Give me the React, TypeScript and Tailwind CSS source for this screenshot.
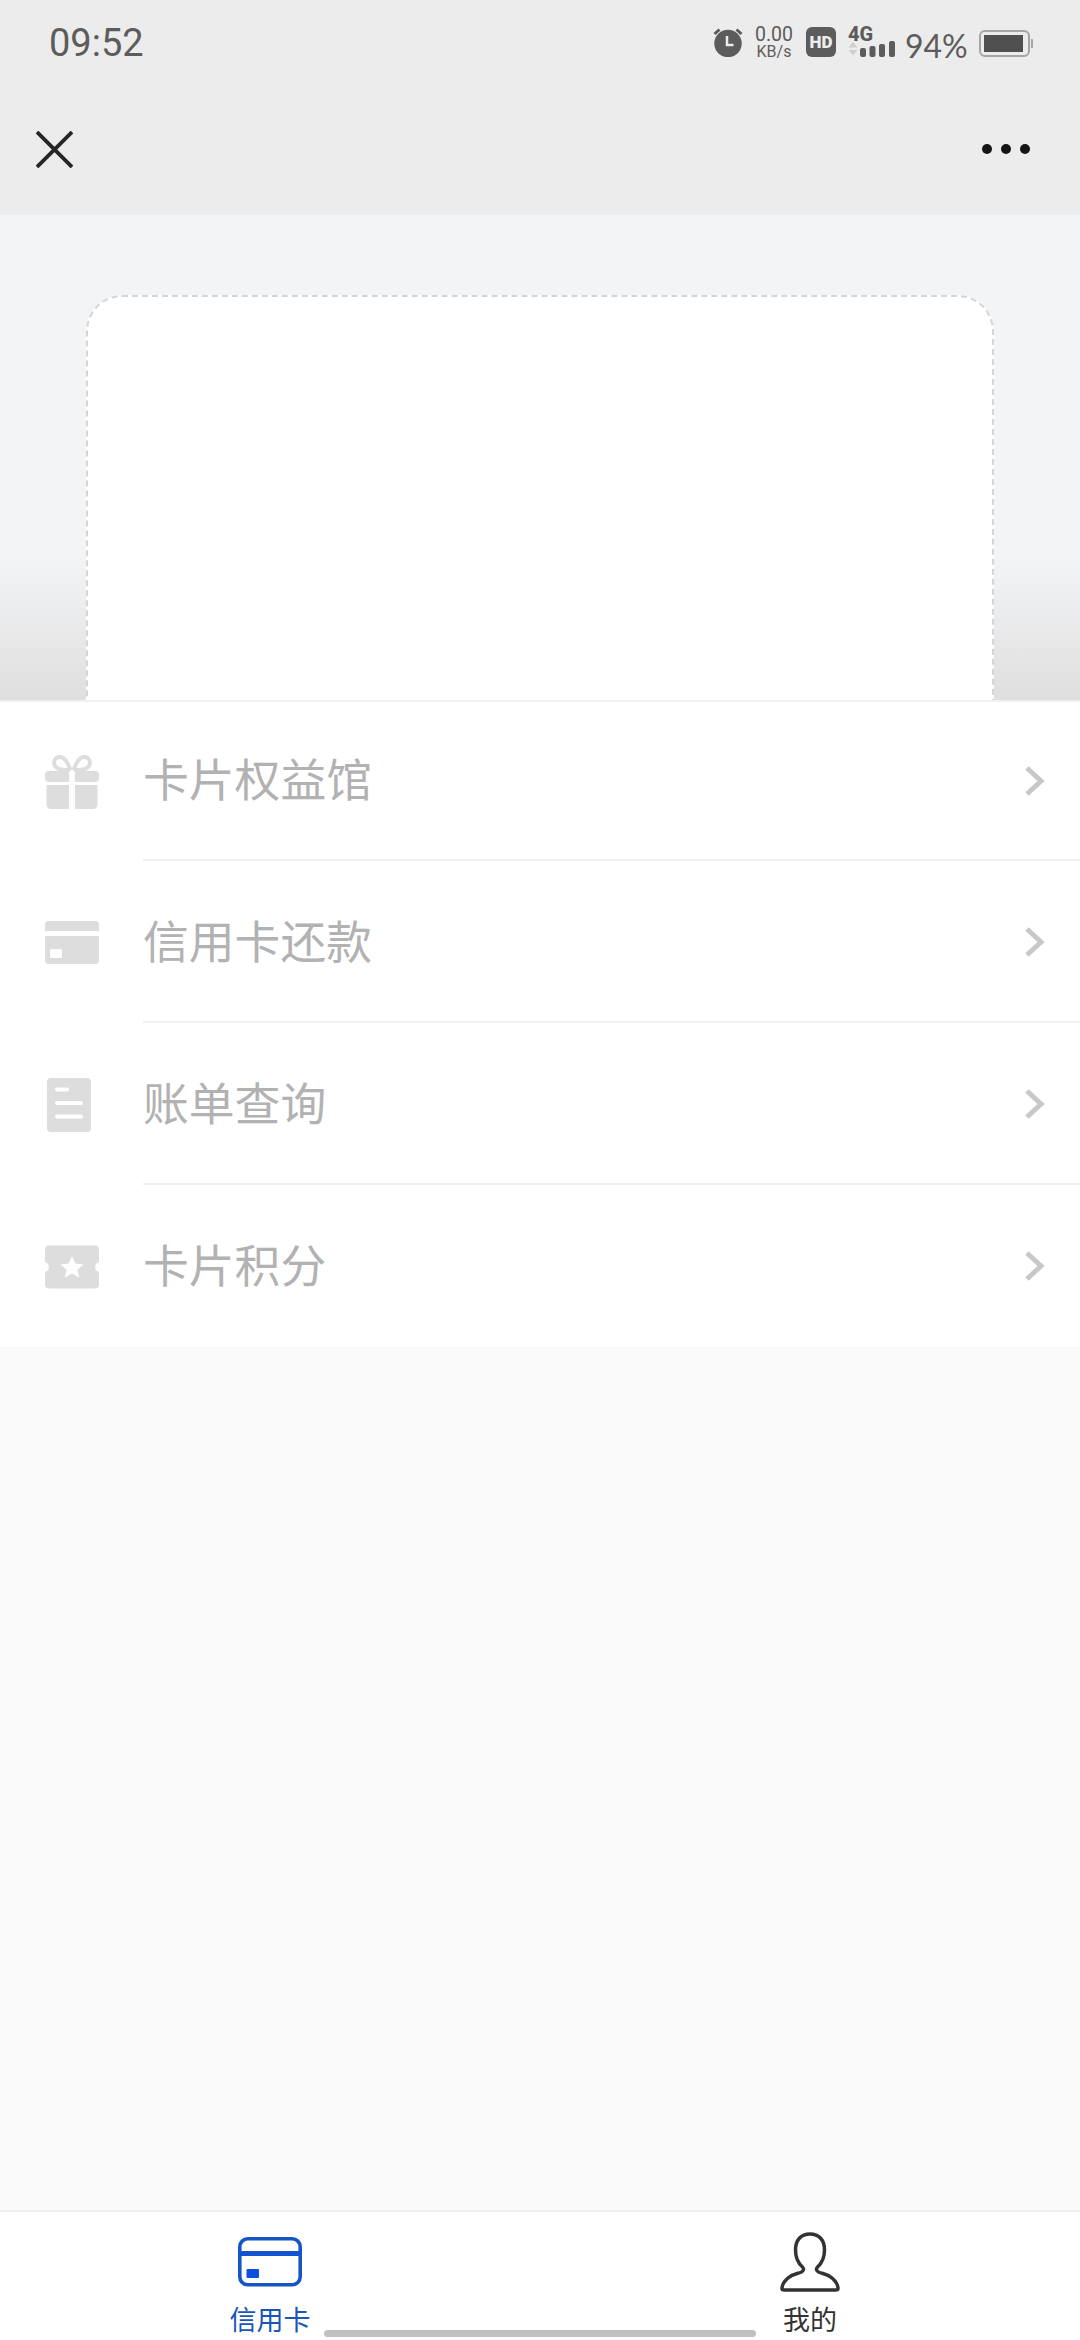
import React, { useState } from "react";

type TabKey = "card" | "mine";

interface MenuItem {
  label: string;
  icon: React.ReactNode;
}

const GiftIcon = () => (
  <svg width="54" height="54" viewBox="0 0 54 54" fill="#dddddd">
    <path
      d="M25 15C23 6 18 1.800 14.500 2C10.500 2.200 8 6 9.500 10C11 14 16 15.500 25 14.500ZM29 15C31 6 36 1.800 39.500 2C43.500 2.200 46 6 44.500 10C43 14 38 15.500 29 14.500Z"
      fill="none"
      stroke="#dddddd"
      strokeWidth="3.800"
    />
    <path d="M4 16H24V27H4Q0 27 0 23V20Q0 16 4 16ZM30 16H50Q54 16 54 20V23Q54 27 50 27H30Z" />
    <path d="M1.500 30H24V54H6.500Q1.500 54 1.500 49ZM30 30H52.500V49Q52.500 54 47.500 54H30Z" />
  </svg>
);

const CardIcon = () => (
  <svg width="54" height="54" viewBox="0 0 54 54" fill="#dddddd">
    <path d="M4 5H50Q54 5 54 9V15H0V9Q0 5 4 5Z" />
    <path d="M0 20H54V44Q54 48 50 48H4Q0 48 0 44Z" />
    <rect x="5" y="33" width="12" height="9" rx="1.500" fill="#ffffff" />
  </svg>
);

const BillIcon = () => (
  <svg width="54" height="54" viewBox="0 0 54 54">
    <rect x="2" width="44" height="54" rx="4" fill="#dddddd" />
    <path
      d="M12 11.500H22M12 25H36M12 38.500H36"
      stroke="#ffffff"
      strokeWidth="4"
      strokeLinecap="round"
    />
  </svg>
);

const PointsIcon = () => (
  <svg width="54" height="54" viewBox="0 0 54 54">
    <path
      d="M4 5.500H50Q54 5.500 54 9.500V22A5.200 5.200 0 0 0 54 32V44.500Q54 48.500 50 48.500H4Q0 48.500 0 44.500V32A5.200 5.200 0 0 0 0 22V9.500Q0 5.500 4 5.500Z"
      fill="#dddddd"
    />
    <path
      d="M27 16L30.500 23.500L38.500 24.500L32.500 30L34.200 37.500L27 33.500L19.800 37.500L21.500 30L15.500 24.500L23.500 23.500Z"
      fill="#ffffff"
    />
  </svg>
);

const menuItems: MenuItem[] = [
  { label: "卡片权益馆", icon: <GiftIcon /> },
  { label: "信用卡还款", icon: <CardIcon /> },
  { label: "账单查询", icon: <BillIcon /> },
  { label: "卡片积分", icon: <PointsIcon /> },
];

const StatusBar = () => (
  <div className="flex h-[84px] items-start justify-between pl-[49px] pr-[47px] text-[#5c5c5c]">
    <span className="mt-[23px] font-['Roboto',sans-serif] text-[38px] leading-[40px]">
      09:52
    </span>
    <div className="mt-[27px] flex h-[31px] items-start">
      <svg width="30" height="30" viewBox="0 0 30 30" fill="#5c5c5c">
        <circle cx="15" cy="16.500" r="13.700" />
        <path d="M1.500 7L6.500 2.500M28.500 7L23.500 2.500" stroke="#5c5c5c" strokeWidth="3" />
        <path d="M14 9V18H20.500" fill="none" stroke="#ededed" strokeWidth="2.500" />
      </svg>
      <div className="ml-[10px] flex w-[42px] flex-col items-center font-['Roboto',sans-serif]">
        <span className="text-[19.500px] leading-[15px]">0.00</span>
        <span className="mt-[2px] text-[16px] leading-[15px]">KB/s</span>
      </div>
      <span className="ml-[11px] flex h-[30px] w-[30px] items-center justify-center rounded-[6px] bg-[#5c5c5c] font-['Roboto',sans-serif] text-[17px] font-black leading-none text-[#ededed]">
        HD
      </span>
      <div className="ml-[12px] flex w-[48px] flex-col">
        <span className="font-['Roboto',sans-serif] text-[20px] font-extrabold leading-[15px]">
          4G
        </span>
        <svg className="mt-[-2px]" width="48" height="18" viewBox="0 0 48 18">
          <path d="M0.500 7.500L5 2L9.500 7.500ZM0.500 10L5 15.500L9.500 10Z" fill="#cfcfcf" />
          <rect x="12" y="8" width="6" height="9" rx="2" fill="#5c5c5c" />
          <rect x="21.500" y="6" width="6" height="11" rx="2" fill="#5c5c5c" />
          <rect x="31" y="4" width="6" height="13" rx="2" fill="#5c5c5c" />
          <rect x="41" y="1" width="6" height="16" rx="2" fill="#5c5c5c" />
        </svg>
      </div>
      <span className="ml-[9px] mt-[4px] w-[65px] whitespace-nowrap font-['Lato',sans-serif] text-[32px] leading-[30px]">
        94%
      </span>
      <svg className="ml-[9px] mt-[3px]" width="54" height="27" viewBox="0 0 54 27">
        <rect x="1" y="1" width="49" height="25" rx="5" fill="none" stroke="#a5a5a5" strokeWidth="2" />
        <rect x="5" y="5" width="39" height="17" fill="#505050" />
        <path d="M52 9H53Q54 9 54 10V17Q54 18 53 18H52Z" fill="#a5a5a5" />
      </svg>
    </div>
  </div>
);

const NavBar = () => (
  <div className="flex h-[131px] items-start justify-between border-b-[6px] border-[#ebecee] pl-9 pr-[50px]">
    <button aria-label="close" className="mt-[47px]">
      <svg width="37" height="37" viewBox="0 0 37 37">
        <path d="M1 1L36 36M36 1L1 36" stroke="#262626" strokeWidth="3.800" />
      </svg>
    </button>
    <button aria-label="more" className="mt-[60px] flex gap-[9px]">
      <span className="h-[10px] w-[10px] rounded-full bg-[#151515]" />
      <span className="h-[10px] w-[10px] rounded-full bg-[#151515]" />
      <span className="h-[10px] w-[10px] rounded-full bg-[#151515]" />
    </button>
  </div>
);

const MenuRow = ({ item }: { item: MenuItem }) => (
  <li className="group flex h-[162px] items-center pl-[45px] pt-[2px] first:h-[159px] first:pt-0">
    <span className="w-[98px] shrink-0">{item.icon}</span>
    <div className="flex h-full flex-1 items-center justify-between border-b-2 border-[#f0f0f0] pr-[35px] group-last:border-white">
      <span className="pb-[5px] text-[45.800px] leading-none text-[#b2b2b2]">
        {item.label}
      </span>
      <svg width="20" height="30" viewBox="0 0 20 30">
        <path d="M2 2L16 15L2 28" fill="none" stroke="#c8c8c8" strokeWidth="5" />
      </svg>
    </div>
  </li>
);

const App = () => {
  const [tab, setTab] = useState<TabKey>("card");

  return (
    <div className="flex h-[2340px] w-[1080px] flex-col overflow-hidden bg-[#fafafa] font-['Noto_Sans_CJK_SC',sans-serif]">
      <header className="bg-[#ececec]">
        <StatusBar />
        <NavBar />
      </header>

      <section className="flex h-[485px] flex-col overflow-hidden bg-linear-to-b from-[#f3f4f6] from-70% to-[#dfdfdf] px-[86px] pt-20">
        <div className="h-[460px] shrink-0 rounded-[36px] border-2 border-dashed border-[#d4d5d7] bg-white" />
      </section>

      <ul className="border-t-2 border-[#f0f0f0] bg-white">
        {menuItems.map((item) => (
          <MenuRow key={item.label} item={item} />
        ))}
      </ul>

      <footer className="relative mt-auto flex h-[130px] border-t-2 border-[#eeeeee] bg-white">
        <button
          onClick={() => setTab("card")}
          className={
            tab === "card"
              ? "flex flex-1 flex-col items-center text-[#1a56b8]"
              : "flex flex-1 flex-col items-center text-[#333333]"
          }
        >
          <svg className="mt-[25px]" width="64" height="50" viewBox="0 0 64 50" fill="none">
            <rect x="1.800" y="1.800" width="60.400" height="46" rx="8" stroke="#1655c4" strokeWidth="3.600" />
            <path d="M2 16.500H62" stroke="#1353cf" strokeWidth="5" />
            <rect x="8.500" y="32" width="12.500" height="9" rx="1" fill="#0d50e0" />
          </svg>
          <span className="mt-[17px] text-[27px] leading-[30px]">信用卡</span>
        </button>
        <button
          onClick={() => setTab("mine")}
          className={
            tab === "mine"
              ? "flex flex-1 flex-col items-center text-[#1a56b8]"
              : "flex flex-1 flex-col items-center text-[#333333]"
          }
        >
          <svg className="mt-[20px]" width="60" height="60" viewBox="0 0 60 60" fill="none">
            <path
              d="M30 2C21 2 15.500 8 15.500 18C15.500 26 18 31 22.500 35Q25 38 21.500 40C17 42 13 41.500 8 46C4 49.500 2 54 2 56.500Q2 58 4.500 58H55.500Q58 58 58 56.500C58 54 56 49.500 52 46C47 41.500 43 42 38.500 40Q35 38 37.500 35C42 31 44.500 26 44.500 18C44.500 8 39 2 30 2Z"
              stroke="#333333"
              strokeWidth="3.500"
              strokeLinejoin="round"
            />
          </svg>
          <span className="mt-[12px] text-[27px] leading-[30px]">我的</span>
        </button>
        {/* gesture bar */}
        <div className="absolute bottom-[3px] left-[324px] h-[7px] w-[432px] rounded-full bg-[#c0c0c0]" />
      </footer>
    </div>
  );
};

export default App;
